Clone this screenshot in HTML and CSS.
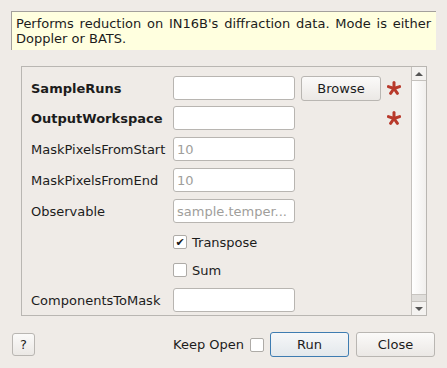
FILE: index.html
```html
<!DOCTYPE html>
<html lang="en">

<head>
    <meta charset="UTF-8">
    <title>IN16BDiffractionReduction</title>
    <link rel="stylesheet" href="styles.css">
</head>

<body>
    <div class="dialog">
        <div class="info">Performs reduction on IN16B's diffraction data. Mode is either Doppler or BATS.</div>

        <div class="frame">
            <div class="props">
                <div class="row">
                    <label class="name required">SampleRuns</label>
                    <input type="text" class="field">
                    <button class="btn browse">Browse</button>
                    <svg class="star" width="14" height="14" viewBox="0 0 14 14">
                        <g stroke="#b8392b" stroke-width="3" stroke-linecap="round">
                            <line x1="7" y1="7.5" x2="7" y2="1.5" />
                            <line x1="7" y1="7.5" x2="12.6" y2="5.6" />
                            <line x1="7" y1="7.5" x2="10.4" y2="12.3" />
                            <line x1="7" y1="7.5" x2="3.6" y2="12.3" />
                            <line x1="7" y1="7.5" x2="1.4" y2="5.6" />
                        </g>
                    </svg>
                </div>
                <div class="row">
                    <label class="name required">OutputWorkspace</label>
                    <input type="text" class="field">
                    <span class="browse-gap"></span>
                    <svg class="star" width="14" height="14" viewBox="0 0 14 14">
                        <g stroke="#b8392b" stroke-width="3" stroke-linecap="round">
                            <line x1="7" y1="7.5" x2="7" y2="1.5" />
                            <line x1="7" y1="7.5" x2="12.6" y2="5.6" />
                            <line x1="7" y1="7.5" x2="10.4" y2="12.3" />
                            <line x1="7" y1="7.5" x2="3.6" y2="12.3" />
                            <line x1="7" y1="7.5" x2="1.4" y2="5.6" />
                        </g>
                    </svg>
                </div>
                <div class="row">
                    <label class="name">MaskPixelsFromStart</label>
                    <input type="text" class="field" placeholder="10">
                </div>
                <div class="row">
                    <label class="name">MaskPixelsFromEnd</label>
                    <input type="text" class="field" placeholder="10">
                </div>
                <div class="row">
                    <label class="name">Observable</label>
                    <input type="text" class="field" placeholder="sample.temper...">
                </div>
                <div class="row check-row">
                    <span class="name"></span>
                    <span class="check checked">&#10004;</span>
                    <span class="check-label">Transpose</span>
                </div>
                <div class="row check-row">
                    <span class="name"></span>
                    <span class="check"></span>
                    <span class="check-label">Sum</span>
                </div>
                <div class="row">
                    <label class="name">ComponentsToMask</label>
                    <input type="text" class="field">
                </div>
            </div>
            <div class="scrollbar">
                <div class="arrow up"></div>
                <div class="handle"></div>
                <div class="track"></div>
                <div class="arrow down"></div>
            </div>
        </div>

        <div class="actions">
            <button class="btn help">?</button>
            <span class="spacer"></span>
            <span class="keep">Keep Open</span>
            <span class="check keep-check"></span>
            <button class="btn run">Run</button>
            <button class="btn close">Close</button>
        </div>
    </div>
</body>

</html>
```

FILE: styles.css
```css
body {
    margin: 0;
    background-color: #efebe7;
    font-family: 'DejaVu Sans', sans-serif;
    font-size: 13px;
    color: #1c1c1c;
}

.dialog {
    width: 447px;
    height: 368px;
    overflow: hidden;
}

.info {
    margin: 11px 11px 0 11px;
    padding: 4px 5px 4px 4px;
    line-height: 15px;
    background-color: #ffffdf;
    border-top: 1px solid #a3a09c;
    border-left: 1px solid #a3a09c;
    text-align: justify;
}

.frame {
    display: flex;
    margin: 16px 20px 0 21px;
    height: 248px;
    border: 1px solid #b9b6b2;
}

.props {
    flex: 1;
    padding: 9px 0 0 9px;
    overflow: hidden;
}

.row {
    display: flex;
    align-items: center;
    height: 24px;
    margin-bottom: 7px;
}

.row:first-child {
    margin-bottom: 6px;
}

/* checkbox rows sit a little tighter than the text rows */
.check-row {
    margin-bottom: 4px;
}

.check-row + .check-row {
    margin-bottom: 6px;
}

.name {
    width: 142px;
    flex-shrink: 0;
    white-space: nowrap;
}

.required {
    font-weight: bold;
}

.field {
    box-sizing: border-box;
    width: 122px;
    height: 24px;
    margin: 0;
    padding: 0 3px;
    border: 1px solid #b8b5b1;
    border-radius: 3px;
    background-color: #ffffff;
    font-family: 'DejaVu Sans', sans-serif;
    font-size: 13px;
}

.field::placeholder {
    color: #a09e9b;
}

.btn {
    box-sizing: border-box;
    height: 25px;
    margin: 0;
    padding: 0;
    border: 1px solid #b9b6b2;
    border-radius: 3px;
    background: linear-gradient(#fbfaf9, #ebe8e5);
    font-family: 'DejaVu Sans', sans-serif;
    font-size: 13px;
    color: #1c1c1c;
}

.browse {
    width: 80px;
    margin-left: 6px;
    flex-shrink: 0;
}

.browse-gap {
    width: 86px;
    flex-shrink: 0;
}

.star {
    margin-left: 6px;
    flex-shrink: 0;
}

.check {
    box-sizing: border-box;
    display: inline-flex;
    align-items: center;
    justify-content: center;
    width: 14px;
    height: 14px;
    border: 1px solid #aeaba7;
    border-radius: 2px;
    background-color: #ffffff;
    font-size: 11px;
    line-height: 1;
    color: #1a1a1a;
    flex-shrink: 0;
}

.check-label {
    margin-left: 5px;
}

.scrollbar {
    display: flex;
    flex-direction: column;
    width: 14px;
    border-left: 1px solid #c4c1bd;
}

.arrow {
    height: 13px;
    position: relative;
    background-color: #f4f2f0;
}

.arrow.up {
    border-bottom: 1px solid #c4c1bd;
}

.arrow.down {
    border-top: 1px solid #c4c1bd;
}

.arrow::after {
    content: "";
    position: absolute;
    left: 3px;
    top: 5px;
    border-left: 4px solid transparent;
    border-right: 4px solid transparent;
}

.arrow.up::after {
    border-bottom: 4px solid #555555;
}

.arrow.down::after {
    border-top: 4px solid #555555;
}

.handle {
    flex: 1;
    background: linear-gradient(to right, #ffffff, #f1efed);
}

.track {
    height: 6px;
    border-top: 1px solid #c8c5c1;
    background-color: #e0dedb;
}

.actions {
    display: flex;
    align-items: center;
    margin-top: 16px;
    padding: 0 12px;
    height: 25px;
}

.help {
    width: 23px;
    height: 23px;
}

.spacer {
    flex: 1;
}

.keep {
    margin-right: 6px;
}

.keep-check {
    margin-right: 6px;
}

.run {
    width: 79px;
    border-color: #3e7cb1;
    background: linear-gradient(#f6f7f8, #e3e8ec);
}

.close {
    width: 79px;
    margin-left: 7px;
}
```
